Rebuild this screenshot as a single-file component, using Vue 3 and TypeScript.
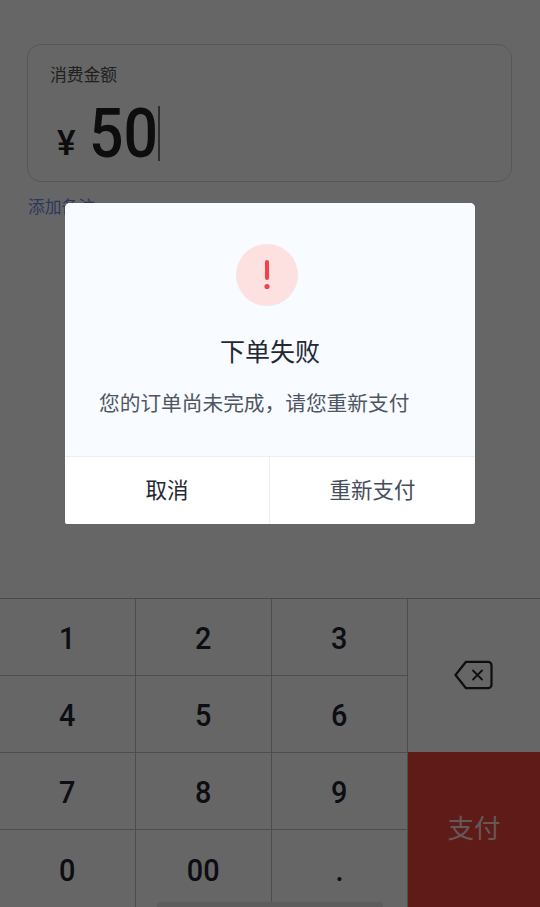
<script setup lang="ts">
const keys: string[] = ['1', '2', '3', '4', '5', '6', '7', '8', '9', '0', '00', '.']
</script>

<template>
  <div class="page">
    <div class="content">
      <div class="card">
        <div class="label">消费金额</div>
        <div class="amount">
          <span class="yen">¥</span>
          <span class="num">50</span>
          <span class="caret"></span>
        </div>
      </div>
      <div class="note">添加备注</div>
    </div>

    <div class="keyboard">
      <div class="digits">
        <div v-for="k in keys" :key="k" class="key"><span class="digit">{{ k }}</span></div>
      </div>
      <div class="side">
        <div class="back">
          <svg width="40" height="30" viewBox="0 0 40 30" fill="none" stroke="#22252f" stroke-width="2.2" stroke-linejoin="round" stroke-linecap="round">
            <path d="M12 1.8H34a3.5 3.5 0 0 1 3.5 3.5V24.7a3.5 3.5 0 0 1-3.5 3.5H12L1.5 15Z" />
            <path d="M19 10.5l9 9M28 10.5l-9 9" stroke-width="1.8" />
          </svg>
        </div>
        <div class="pay">支付</div>
      </div>
    </div>

    <div class="handle"></div>
    <div class="overlay"></div>

    <div class="dialog">
      <div class="body">
        <div class="icon">
          <svg width="8" height="30" viewBox="0 0 8 30">
            <rect x="2" y="0" width="4" height="20" rx="2" fill="#f5424a" />
            <circle cx="4" cy="26.5" r="2.6" fill="#f5424a" />
          </svg>
        </div>
        <div class="title">下单失败</div>
        <div class="msg">您的订单尚未完成，请您重新支付</div>
      </div>
      <div class="actions">
        <div class="act cancel">取消</div>
        <div class="act retry">重新支付</div>
      </div>
    </div>
  </div>
</template>

<style scoped>
.page {
  position: relative;
  width: 540px;
  height: 907px;
  overflow: hidden;
  display: flex;
  flex-direction: column;
  background: #fff;
  font-family: "Noto Sans CJK SC", "Noto Sans", sans-serif;
}
.content {
  flex: 1;
  padding: 44px 28px 0 27px;
}
.card {
  height: 138px;
  box-sizing: border-box;
  border: 1px solid #d8d8d8;
  border-radius: 14px;
  padding: 17px 21px 0 22px;
}
.label {
  font-size: 16.8px;
  line-height: 24px;
  color: #505050;
}
.amount {
  display: flex;
  align-items: flex-end;
  height: 70px;
  margin-top: 10px;
  padding-left: 7px;
}
.yen {
  font-family: Roboto, sans-serif;
  font-weight: 500;
  font-size: 35px;
  line-height: 40px;
  color: #222;
  width: 26px;
  margin-bottom: 2px;
}
.num {
  font-family: Roboto, sans-serif;
  font-weight: 500;
  font-size: 69px;
  line-height: 70px;
  color: #222;
  margin-left: 6px;
  margin-bottom: -3px;
  transform: scaleX(0.88);
  transform-origin: left center;
  width: 69px;
}
.caret {
  width: 2px;
  height: 55px;
  background: #707070;
  margin-bottom: 5px;
}
.note {
  margin-top: 12px;
  padding-left: 1px;
  font-size: 16.8px;
  line-height: 24px;
  color: #6f8de0;
}
.keyboard {
  display: flex;
  height: 309px;
  box-sizing: border-box;
  border-top: 1px solid #b8b8b8;
}
.digits {
  width: 408px;
  display: grid;
  grid-template-columns: 136px 136px 136px;
  grid-auto-rows: 77px;
}
.key {
  box-sizing: border-box;
  padding-top: 2px;
  border-right: 1px solid #c0c0c0;
  border-bottom: 1px solid #c0c0c0;
  display: flex;
  align-items: center;
  justify-content: center;
  color: #1f2330;
}
.key:nth-last-child(-n + 3) {
  border-bottom: none;
}
.digit {
  display: inline-block;
  font-family: Roboto, sans-serif;
  font-weight: 500;
  font-size: 32px;
  transform: scaleX(0.9);
}
.side {
  width: 132px;
  display: flex;
  flex-direction: column;
}
.back {
  height: 153px;
  box-sizing: border-box;
  padding-bottom: 2px;
  display: flex;
  align-items: center;
  justify-content: center;
}
.pay {
  flex: 1;
  background: #ea443d;
  color: #ffdcd8;
  font-size: 26.5px;
  padding-bottom: 7px;
  box-sizing: border-box;
  display: flex;
  align-items: center;
  justify-content: center;
}
.handle {
  position: absolute;
  left: 157px;
  bottom: 0;
  width: 226px;
  height: 5px;
  border-radius: 3px 3px 0 0;
  background: #e8e8e8;
}
.overlay {
  position: absolute;
  inset: 0;
  background: rgba(0, 0, 0, 0.6);
}
.dialog {
  position: absolute;
  left: 65px;
  top: 203px;
  width: 410px;
  height: 321px;
  border-radius: 5px 5px 2px 2px;
  overflow: hidden;
  display: flex;
  flex-direction: column;
  background: #fff;
}
.body {
  height: 253px;
  background: #f8fbff;
  display: flex;
  flex-direction: column;
  align-items: flex-start;
  padding: 41px 0 0 34px;
  box-sizing: border-box;
}
.icon {
  width: 62px;
  height: 62px;
  margin-left: 137px;
  border-radius: 50%;
  background: #fde0e0;
  display: flex;
  align-items: center;
  justify-content: center;
}
.title {
  align-self: center;
  margin: 26px 0 0 -34px;
  font-size: 25px;
  line-height: 36px;
  color: #232833;
}
.msg {
  margin-top: 19px;
  font-size: 20.7px;
  line-height: 30px;
  color: #4e5563;
  white-space: nowrap;
}
.actions {
  flex: 1;
  display: flex;
  border-top: 1px solid #eeeeee;
}
.act {
  display: flex;
  align-items: center;
  justify-content: center;
  font-size: 21.5px;
  padding-bottom: 4px;
}
.cancel {
  width: 204px;
  border-right: 1px solid #eeeeee;
  color: #232833;
}
.retry {
  flex: 1;
  color: #464d5c;
}
</style>

<style>
html, body { margin: 0; padding: 0; }
</style>
